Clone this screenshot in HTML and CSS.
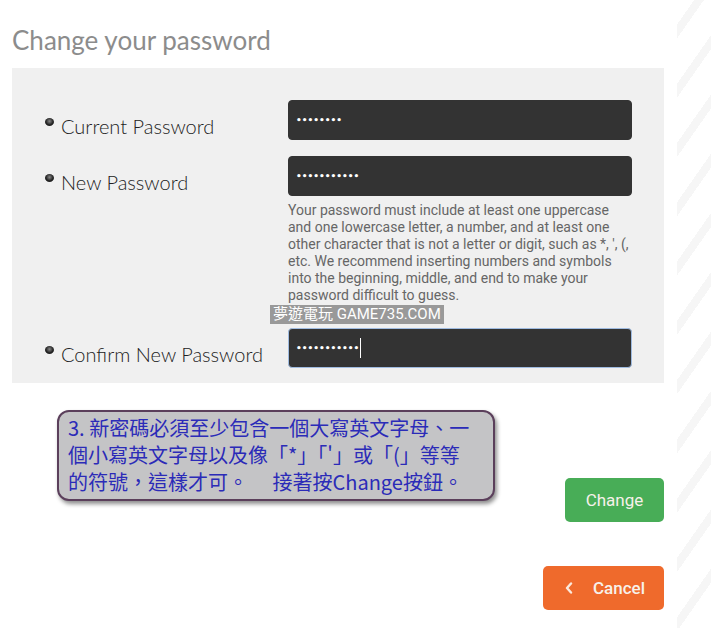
FILE: index.html
```html
<!DOCTYPE html>
<html lang="zh-Hant">

<head>
    <meta charset="UTF-8">
    <meta name="viewport" content="width=device-width, initial-scale=1.0">
    <title>Change your password</title>
    <link rel="stylesheet" href="styles.css">
</head>

<body>
    <div class="deco"></div>

    <div class="page">
        <h1 class="title">Change your password</h1>

        <!-- Formulário -->
        <div class="panel">
            <div class="label"><span class="dot"></span>Current Password</div>
            <div class="cell">
                <div class="field">••••••••</div>
            </div>

            <div class="label"><span class="dot"></span>New Password</div>
            <div class="cell">
                <div class="field">•••••••••••</div>
                <p class="help">
                    Your password must include at least one uppercase<br>
                    and one lowercase letter, a number, and at least one<br>
                    other character that is not a letter or digit, such as *, ', (,<br>
                    etc. We recommend inserting numbers and symbols<br>
                    into the beginning, middle, and end to make your<br>
                    password difficult to guess.
                </p>
            </div>

            <div class="label label-bottom"><span class="dot"></span>Confirm New Password</div>
            <div class="cell">
                <div class="field focused">•••••••••••<span class="caret"></span></div>
            </div>

            <div class="watermark">夢遊電玩 GAME735.COM</div>
        </div>

        <!-- Botões -->
        <div class="actions">
            <div class="note">
                3. 新密碼必須至少包含一個大寫英文字母、一<br>
                個小寫英文字母以及像「*」「'」或「(」等等<br>
                的符號，這樣才可。　 接著按Change按鈕。
            </div>
            <div class="buttons">
                <button class="btn btn-change">Change</button>
                <button class="btn btn-cancel">
                    <svg class="chev" width="8" height="12" viewBox="0 0 8 12">
                        <path d="M6 1.5L2 6l4 4.5" fill="none" stroke="#fbe9dc" stroke-width="2.4" stroke-linecap="round" stroke-linejoin="round"/>
                    </svg>
                    Cancel
                </button>
            </div>
        </div>
    </div>
</body>

</html>
```

FILE: styles.css
```css
* {
    box-sizing: border-box;
    margin: 0;
    padding: 0;
}

body {
    font-family: Lato, "Open Sans", sans-serif;
    background-color: #fff;
    width: 711px;
    height: 628px;
    overflow: hidden;
    position: relative;
}

.deco {
    position: absolute;
    top: 0;
    right: 0;
    width: 34px;
    height: 100%;
    background: repeating-linear-gradient(-55deg, #fff 0, #fff 26px, #f6f6f6 26px, #f6f6f6 34px);
}

.page {
    width: 652px;
    margin-left: 12px;
    position: relative;
}

.title {
    font-size: 26px;
    font-weight: 400;
    color: #8c8c8c;
    line-height: 30px;
    padding-top: 25px;
    height: 68px;
}

.panel {
    position: relative;
    background-color: #f0f0f0;
    display: grid;
    grid-template-columns: 243px 344px;
    row-gap: 16px;
    padding: 32px 0 15px 33px;
}

.label {
    display: flex;
    align-items: flex-start;
    font-size: 20px;
    font-weight: 300;
    color: #222;
    line-height: 24px;
    padding-top: 14px;
}

.dot {
    width: 9px;
    height: 8px;
    border-radius: 50%;
    background: radial-gradient(circle at 50% 40%, #888 0, #222 55%);
    margin: 4px 7px 0 0;
}

.field {
    height: 40px;
    background-color: #333;
    border-radius: 4px;
    border: 1px solid #333;
    color: #fff;
    font-family: "DejaVu Sans", sans-serif;
    font-size: 9px;
    font-weight: 700;
    line-height: 38px;
    padding-left: 7px;
    display: flex;
    align-items: center;
}

.field.focused {
    border-color: #9fbbe0;
}

.caret {
    width: 1px;
    height: 20px;
    background-color: #fff;
    margin-left: 1px;
}

.help {
    font-family: Roboto, sans-serif;
    font-size: 14px;
    line-height: 17px;
    color: #666;
    margin: 6px 0 8px;
}

.watermark {
    position: absolute;
    left: 258px;
    top: 237px;
    height: 19px;
    padding: 0 3px;
    background-color: #999;
    color: #fff;
    font-family: Roboto, "Noto Sans CJK TC", sans-serif;
    font-size: 15px;
    line-height: 19px;
}

.actions {
    display: flex;
    justify-content: space-between;
    margin-top: 27px;
}

.note {
    margin-left: 45px;
    width: 438px;
    height: 91px;
    background-color: #c4c4c6;
    border: 2px solid #5b3f5b;
    border-radius: 12px;
    box-shadow: 2px 3px 4px rgba(0, 0, 0, 0.45);
    padding: 2px 0 0 9px;
    font-family: "Noto Sans CJK TC", sans-serif;
    font-size: 20px;
    line-height: 27px;
    color: #2b2bb8;
    white-space: nowrap;
}

.buttons {
    display: flex;
    flex-direction: column;
    align-items: flex-end;
    padding-top: 68px;
    gap: 44px;
}

.btn {
    height: 44px;
    border: none;
    border-radius: 5px;
    color: #f7f1ea;
    font-family: Roboto, sans-serif;
    font-size: 17px;
    cursor: pointer;
}

.btn-change {
    width: 99px;
    background-color: #48ad57;
}

.btn-cancel {
    width: 121px;
    background-color: #ef6a2c;
    display: flex;
    align-items: center;
    padding-left: 22px;
    gap: 20px;
    font-weight: 500;
}
```
